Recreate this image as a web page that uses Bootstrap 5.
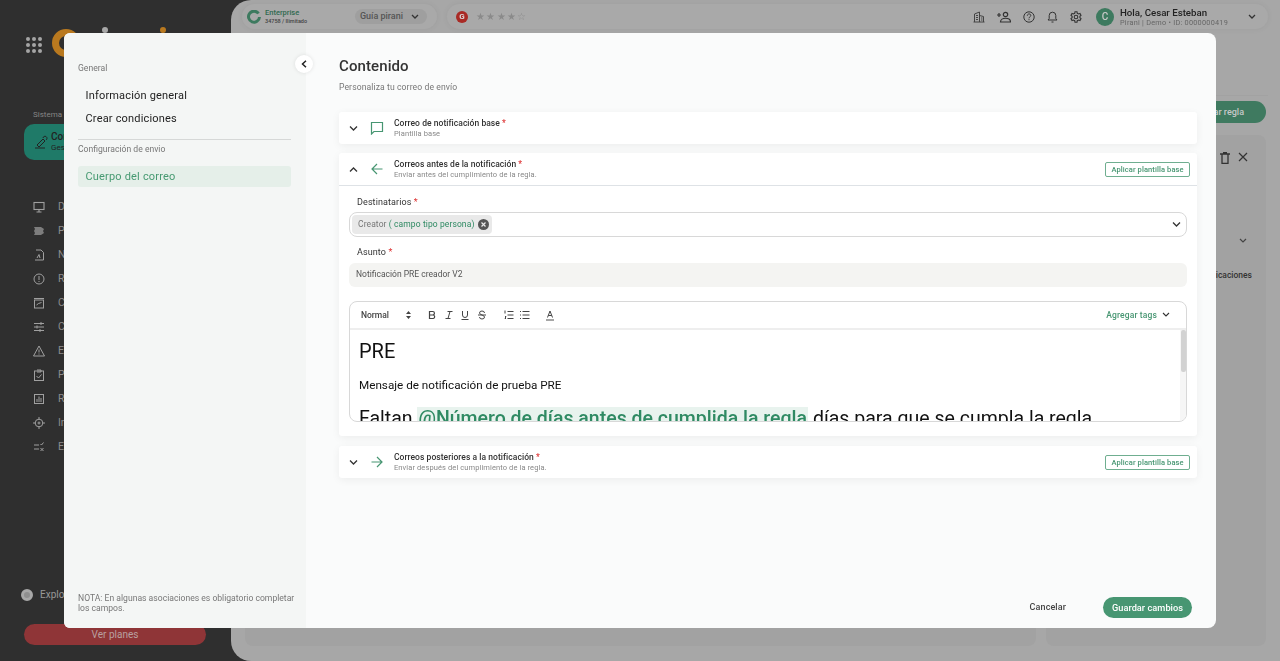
<!DOCTYPE html>
<html lang="es">
<head>
<meta charset="utf-8">
<title>Contenido</title>
<link href="https://cdn.jsdelivr.net/npm/bootstrap@5.3.0/dist/css/bootstrap.min.css" rel="stylesheet">
<style>
html,body{height:100%;overflow:hidden}
body{font-family:Roboto,"Liberation Sans",sans-serif;background:#2f2f2f;color:#222;position:relative}
svg{display:block;flex:none}
.shell{height:661px;filter:blur(.5px)}
.dark-side{width:231px;background:#2f2f2f;color:#9a9a9a;flex:none;height:661px}
.apps{display:grid;grid-template-columns:repeat(3,4px);gap:2px;margin:37px 0 0 26px;width:16px;height:16px}
.apps i{width:4px;height:4px;background:#a5a5a5;border-radius:50%}
.logo-ring{position:absolute;left:52px;top:29px;width:28px;height:28px;border:7px solid #b9791f;border-radius:50%}
.logo-dot{position:absolute;top:27px;width:6px;height:6px;border-radius:50%}
.sys-label{font-size:8px;margin:56px 0 0 33px;line-height:12px;color:#858585;width:31px;overflow:hidden;white-space:nowrap}
.sys-card{margin:3px 0 0 24px;height:36px;width:190px;background:#1f7a68;border-radius:10px;color:#222;padding-left:10px;gap:3px}
.sys-text{width:13px;overflow:hidden;white-space:nowrap;font-size:10px;line-height:10px;font-weight:500}
.sys-text span{font-size:8px;font-weight:400}
.side-nav{margin-top:35px;padding-left:33px}
.side-nav>div{height:24px;font-size:10.5px;gap:13px;color:#8c8c8c}
.explore{position:absolute;left:21px;top:587px;gap:7px;font-size:10px;color:#999}
.explore i{width:12px;height:12px;border-radius:50%;background:#8f8f8f;border:3px solid #a8a8a8}
.plans{position:absolute;left:24px;top:624px;width:182px;height:21px;border-radius:11px;background:#8f3537;color:#b9a0a0;font-size:10px;line-height:21px;text-align:center}
.main-area{background:#a7a7a7;border-radius:20px 0 0 20px;height:661px;position:relative;flex:1}
.top-pill{position:absolute;top:4px;height:25px;background:#a9a9a9;border-radius:13px;box-shadow:0 0 6px rgba(0,0,0,.06)}
.plan-name{font-size:7.5px;font-weight:500;color:#2f6a50;line-height:8px}
.plan-sub{font-size:5.5px;font-weight:500;color:#444;line-height:8px}
.guide{font-size:9px;color:#555;background:#9f9f9f;border-radius:10px;height:15px;padding:0 8px 0 5px;gap:8px;font-weight:500;margin-right:2px}
.star{font-size:10px;color:#8a8a8a;letter-spacing:1.3px}
.g-icon{width:12px;height:12px;border-radius:50%;background:#a92a25;color:#ddd;font-size:8px;font-weight:700;line-height:12px;text-align:center}
.hello{font-size:9.7px;font-weight:500;color:#222;line-height:11px;white-space:nowrap}
.hello-sub{font-size:7.3px;color:#666;line-height:9px;letter-spacing:.25px;white-space:nowrap}
.avatar{width:18px;height:18px;border-radius:50%;background:#3d7a5f;color:#c9c9c9;font-size:10px;font-weight:500;text-align:center;line-height:18px}
.user-box{width:131px;gap:6px;margin-left:2px}
.user-caret{margin-left:9px}
.bg-line{position:absolute;left:0;right:12px;top:95px;height:1px;background:#a2a2a2}
.new-rule{position:absolute;right:14px;top:101px;width:100px;height:22px;border-radius:11px;background:#3f7a60;color:#c8c8c8;font-size:9px;font-weight:500;line-height:22px;text-align:right;padding-right:22px}
.bg-panel{position:absolute;top:135px;height:511px;background:#a2a2a2;border-radius:8px}
.bg-tools{margin:17px 18px 0 0;height:12px}
.bg-caret{position:absolute;left:1008px;top:238px}
.bg-word{position:absolute;left:985px;top:269px;font-size:8.5px;font-weight:500;color:#333;width:36px;overflow:hidden;white-space:nowrap;direction:rtl}
.modal-box{position:absolute;left:64px;top:33px;width:1152px;height:595px;background:#fafbfb;border-radius:6px 8px 8px 6px;overflow:hidden;z-index:5}
.m-side{width:242px;background:#f4f6f5;padding:30px 15px 15px 14px;flex:none}
.m-label{font-size:8.6px;color:#777;line-height:11px}
.m-item{font-size:11px;letter-spacing:.18px;color:#222;line-height:23px;padding-left:7.5px}
.m-first{margin-top:10px}
.m-active{background:#e5efe9;color:#479a72;border-radius:3px;height:21px;line-height:21px;margin-top:11px}
.m-rule{border-top:1px solid #d6d8d7;margin:9px 0 4px}
.m-note{font-size:8.6px;line-height:10px;color:#777;margin-top:auto;margin-right:-4px}
.collapse-dot{position:absolute;left:231px;top:22px;width:18px;height:18px;border-radius:50%;background:#fff;box-shadow:0 0 4px rgba(0,0,0,.1);z-index:6}
.m-main{padding:24px 19px 10px 33px;min-width:0}
.m-title{font-size:15px;font-weight:500;line-height:18px;color:#333;letter-spacing:.1px}
.m-sub{font-size:8.6px;color:#777;line-height:11px;margin-top:7px;letter-spacing:.1px}
.acc{background:#fff;border-radius:3px;box-shadow:0 2px 8px rgba(0,0,0,.06)}
.acc-one{margin-top:19px}
.acc-two{margin-top:9px;height:283px}
.acc-three{margin-top:10px}
.acc-head{height:32px;padding:0 7px 0 10px}
.acc-head-open{height:33px}
.acc-ic{margin:0 10px 0 12px}
.acc-title{font-size:8.5px;font-weight:500;color:#333;line-height:11px;letter-spacing:.05px}
.acc-title b{color:#d33;font-weight:500}
.acc-sub{font-size:7.5px;color:#888;line-height:10px;letter-spacing:.1px}
.apply{font-size:7.5px;font-weight:500;color:#479672;border:1px solid #6fae90;border-radius:2px;background:#fff;padding:0;width:85px;height:15px;line-height:13px;letter-spacing:.1px}
.acc-body{padding:10px 10px 0}
.fld-label{font-size:9px;color:#333;line-height:12px;padding-left:8px;letter-spacing:.1px}
.fld-label b{color:#d33;font-weight:400}
.fld-gap{margin-top:9px}
.sel-box{height:25px;border:1px solid #d8d8d8;border-radius:8px;padding:0 5px 0 2px;margin-top:4px}
.chip{height:19px;background:#e9e9e9;border-radius:4px;font-size:8.5px;color:#777;padding:0 3px 0 6px;gap:4px;letter-spacing:.1px}
.chip span{color:#2f8a63}
.chip-x{width:11px;height:11px;background:#555;border-radius:50%}
.subject{height:24px;background:#f4f4f2;border-radius:6px;font-size:8.5px;color:#555;padding-left:7px;margin-top:5px;line-height:22px}
.editor{height:121px;border:1px solid #d8d8d8;border-radius:8px;margin-top:14px;overflow:hidden}
.tools{height:28px;border-bottom:2px solid #eee;padding:0 16px 0 11px;font-size:8.5px;font-weight:500;color:#444}
.spin{margin-left:17px}
.fmt-a{gap:6.5px;margin-left:16px}
.fmt-b{gap:6px;margin-left:17px}
.fmt-c{margin-left:15px}
.tag-add{font-size:8.5px;color:#479672;letter-spacing:.15px;gap:5px}
.ed-body{height:91px;overflow:hidden;padding:0 0 0 9px;position:relative}
.ed-h{font-size:20px;line-height:24px;color:#111;white-space:nowrap;margin-top:9px}
.ed-line{font-size:19.5px;line-height:24px;color:#111;white-space:nowrap}
.ed-p{font-size:11.7px;line-height:14px;color:#111;margin:15px 0 15px}
.mention{background:#e8f3ee;color:#2f8a63;font-weight:500;padding:0 1px}
.bar-track{position:absolute;right:0;top:0;bottom:0;width:6px;background:#f6f6f6}
.bar-thumb{position:absolute;left:1px;top:0;width:5px;height:42px;background:#d2d2d2;border-radius:2px}
.foot{padding-right:5px}
.cancel{font-size:9px;font-weight:500;color:#444;letter-spacing:.1px}
.save{width:89px;height:21px;background:#479672;color:#fff;border-radius:11px;border:0;font-size:9.2px;font-weight:500;padding:0;letter-spacing:.05px;margin-left:37px}
</style>
</head>
<body>
<div class="shell d-flex">
  <aside class="dark-side">
    <div class="apps"><i></i><i></i><i></i><i></i><i></i><i></i><i></i><i></i><i></i></div>
    <div class="logo-ring"></div>
    <div class="logo-dot" style="left:102px;background:#a8a8a8"></div>
    <div class="logo-dot" style="left:160px;background:#b9791f"></div>
    <div class="sys-label">Sistema de gestión</div>
    <div class="sys-card d-flex align-items-center">
      <svg width="14" height="14" viewBox="0 0 14 14" fill="none" stroke="#222" stroke-width="1"><path d="M1 13h10M3 10l6-6 2 2-6 6zM9 3a2 2 0 1 1 3 2"/></svg>
      <div class="sys-text">Con<br><span>Gestión</span></div>
    </div>
    <div class="side-nav">
      <div class="d-flex align-items-center"><svg width="12" height="12" viewBox="0 0 12 12" fill="none" stroke="#a0a0a0" stroke-width="1.1"><rect x="1" y="1.500" width="10" height="7"/><path d="M6 9v2M3.500 11h5"/></svg>D</div>
      <div class="d-flex align-items-center"><svg width="12" height="12" viewBox="0 0 12 12" fill="#7d7d7d"><path d="M1 2h7l3 2-1 2 1 2-3 2H1l1-2-1-2 1-2z"/></svg>P</div>
      <div class="d-flex align-items-center"><svg width="12" height="12" viewBox="0 0 12 12" fill="none" stroke="#a0a0a0" stroke-width="1"><path d="M3 1h5l2.500 2.500V11H2M4 9l2-3.500L7 9"/></svg>N</div>
      <div class="d-flex align-items-center"><svg width="12" height="12" viewBox="0 0 12 12" fill="none" stroke="#a0a0a0" stroke-width="1"><circle cx="6" cy="6" r="5"/><path d="M6 3v4M6 8v1"/></svg>R</div>
      <div class="d-flex align-items-center"><svg width="12" height="12" viewBox="0 0 12 12" fill="none" stroke="#a0a0a0" stroke-width="1"><rect x="1.500" y="3" width="9" height="8"/><path d="M1 1.500h10M3.500 8l2-1.500 3-1"/></svg>C</div>
      <div class="d-flex align-items-center"><svg width="12" height="12" viewBox="0 0 12 12" fill="none" stroke="#a0a0a0" stroke-width="1"><path d="M1 2.500h10M1 6h10M1 9.500h10M8 1v3M4 4.500v3M7 8v3"/></svg>C</div>
      <div class="d-flex align-items-center"><svg width="12" height="12" viewBox="0 0 12 12" fill="none" stroke="#a0a0a0" stroke-width="1"><path d="M6 1l5.500 10H.5zM6 4.500v3M6 8.500v1"/></svg>E</div>
      <div class="d-flex align-items-center"><svg width="12" height="12" viewBox="0 0 12 12" fill="none" stroke="#a0a0a0" stroke-width="1"><rect x="1.500" y="2" width="9" height="9.500"/><path d="M4 1h4v2H4M3.500 7l2 2 3-3.500"/></svg>P</div>
      <div class="d-flex align-items-center"><svg width="12" height="12" viewBox="0 0 12 12" fill="none" stroke="#a0a0a0" stroke-width="1"><rect x="1.500" y="1.500" width="9" height="9"/><path d="M4 9V6M6 9V3.500M8 9V5"/></svg>R</div>
      <div class="d-flex align-items-center"><svg width="12" height="12" viewBox="0 0 12 12" fill="none" stroke="#a0a0a0" stroke-width="1"><circle cx="6" cy="6" r="3.800"/><circle cx="6" cy="6" r="1"/><path d="M6 0v2.500M6 9.500V12M0 6h2.500M9.500 6H12"/></svg>In</div>
      <div class="d-flex align-items-center"><svg width="12" height="12" viewBox="0 0 12 12" fill="none" stroke="#a0a0a0" stroke-width="1"><path d="M1 4h5M1 8h5M7.500 3l1 1 2-2.500M7.500 7l3 3M10.500 7l-3 3"/></svg>E</div>
    </div>
    <div class="explore d-flex align-items-center"><i></i>Explo</div>
    <div class="plans">Ver planes</div>
  </aside>
  <main class="main-area">
    <div class="top-pill d-flex align-items-center" style="left:11px;width:195px;padding:0 8px 0 5px">
      <svg width="14" height="14" viewBox="0 0 14 14" fill="none" stroke="#3d7a5f" stroke-width="3"><path d="M11.500 3.500A5.500 5.500 0 1 0 12.500 7"/></svg>
      <div class="ms-1"><div class="plan-name">Enterprise</div><div class="plan-sub">34758 / Ilimitado</div></div>
      <div class="guide d-flex align-items-center ms-auto">Guía pirani
        <svg width="8" height="6" viewBox="0 0 8 6" fill="none" stroke="#333" stroke-width="1.300"><path d="M1 1l3 3 3-3"/></svg></div>
    </div>
    <div class="top-pill d-flex align-items-center" style="left:216px;width:821px;padding:0 12px 0 9px">
      <div class="g-icon">G</div><div class="star ms-2">★★★★☆</div>
      <div class="ms-auto d-flex align-items-center" style="gap:12px">
        <svg width="12" height="12" viewBox="0 0 12 12" fill="none" stroke="#444" stroke-width="1"><path d="M1.500 11V3l5-2v10M6.500 4.500l4 1V11M.5 11h11M3 4.500h2M3 6.500h2M3 8.500h2M8 7h1.500M8 9h1.500"/></svg>
        <svg width="14" height="12" viewBox="0 0 14 12" fill="none" stroke="#333" stroke-width="1.200"><circle cx="8.500" cy="3.500" r="2.200"/><path d="M3.500 11c0-5 10-5 10 0zM0 4h4M2 2v4"/></svg>
        <svg width="12" height="12" viewBox="0 0 12 12" fill="none" stroke="#333" stroke-width="1"><circle cx="6" cy="6" r="5.200"/><path d="M4.300 4.700c0-2.300 3.500-2.300 3.500-.2 0 1.300-1.800 1.300-1.800 2.800M6 8.200v1"/></svg>
        <svg width="11" height="12" viewBox="0 0 11 12" fill="none" stroke="#333" stroke-width="1"><path d="M1 9h9L8.800 7.500V4.500a3.300 3.300 0 0 0-6.600 0v3zM4.500 11h2"/></svg>
        <svg width="12" height="12" viewBox="0 0 12 12" fill="none" stroke="#333" stroke-width="1.100"><circle cx="6" cy="6" r="1.800"/><path d="M5 .8h2l.3 1.500 1.300.7 1.400-.5 1 1.800-1.100 1v1.400l1.100 1-1 1.800-1.400-.5-1.300.7L7 11.200H5l-.3-1.500-1.300-.7-1.400.5-1-1.800 1.100-1V5.300L1 4.300l1-1.800 1.400.5 1.300-.7z"/></svg>
        <div class="user-box d-flex align-items-center">
          <div class="avatar flex-shrink-0">C</div>
          <div><div class="hello">Hola, Cesar Esteban</div><div class="hello-sub">Pirani | Demo • ID: 0000000419</div></div>
        </div>
        <svg class="user-caret" width="8" height="6" viewBox="0 0 8 6" fill="none" stroke="#333" stroke-width="1.300"><path d="M1 1l3 3 3-3"/></svg>
      </div>
    </div>
    <div class="bg-line"></div>
    <div class="new-rule">Crear regla</div>
    <div class="bg-panel" style="left:14px;width:791px"></div>
    <div class="bg-panel d-flex justify-content-end" style="left:815px;width:220px">
      <div class="bg-tools d-flex gap-2">
        <svg width="10" height="12" viewBox="0 0 10 12" fill="none" stroke="#333" stroke-width="1.300"><path d="M0 2h10M2 2v9.300h6V2M3 .7h4"/></svg>
        <svg width="10" height="10" viewBox="0 0 10 10" fill="none" stroke="#333" stroke-width="1.200"><path d="M1 1l8 8M9 1l-8 8"/></svg>
      </div>
    </div>
    <div class="bg-caret"><svg width="8" height="6" viewBox="0 0 8 6" fill="none" stroke="#444" stroke-width="1.200"><path d="M1 1l3 3 3-3"/></svg></div>
    <div class="bg-word">icaciones</div>
  </main>
</div>

<div class="modal-box d-flex">
  <div class="m-side d-flex flex-column">
    <div class="m-label">General</div>
    <div class="m-item m-first">Información general</div>
    <div class="m-item">Crear condiciones</div>
    <div class="m-rule"></div>
    <div class="m-label">Configuración de envio</div>
    <div class="m-item m-active">Cuerpo del correo</div>
    <div class="m-note">NOTA: En algunas asociaciones es obligatorio completar los campos.</div>
  </div>
  <div class="collapse-dot d-flex align-items-center justify-content-center">
    <svg width="6" height="8" viewBox="0 0 6 8" fill="none" stroke="#222" stroke-width="1.500"><path d="M5 .7L1.500 4 5 7.300"/></svg>
  </div>
  <div class="m-main flex-grow-1 d-flex flex-column">
    <div class="m-title">Contenido</div>
    <div class="m-sub">Personaliza tu correo de envío</div>
    <div class="acc acc-one">
      <div class="acc-head d-flex align-items-center">
        <svg width="9" height="7" viewBox="0 0 9 7" fill="none" stroke="#333" stroke-width="1.300"><path d="M1 1.500l3.500 3.500L8 1.500"/></svg>
        <svg class="acc-ic" width="14" height="14" viewBox="0 0 14 14" fill="none" stroke="#479672" stroke-width="1.200"><path d="M1.500 1.500h11v9H4l-2.500 2.500z"/></svg>
        <div><div class="acc-title">Correo de notificación base <b>*</b></div><div class="acc-sub">Plantilla base</div></div>
      </div>
    </div>
    <div class="acc acc-two">
      <div class="acc-head acc-head-open d-flex align-items-center border-bottom">
        <svg width="9" height="7" viewBox="0 0 9 7" fill="none" stroke="#333" stroke-width="1.300"><path d="M1 5.500L4.500 2 8 5.500"/></svg>
        <svg class="acc-ic" width="14" height="14" viewBox="0 0 14 14" fill="none" stroke="#479672" stroke-width="1.200"><path d="M12.500 7H2M7 2L2 7l5 5"/></svg>
        <div><div class="acc-title">Correos antes de la notificación <b>*</b></div><div class="acc-sub">Enviar antes del cumplimiento de la regla.</div></div>
        <button class="apply ms-auto" type="button">Aplicar plantilla base</button>
      </div>
      <div class="acc-body">
        <div class="fld-label">Destinatarios <b>*</b></div>
        <div class="sel-box d-flex align-items-center justify-content-between">
          <div class="chip d-flex align-items-center"><div>Creator <span>( campo tipo persona)</span></div>
            <div class="chip-x d-flex align-items-center justify-content-center"><svg width="5" height="5" viewBox="0 0 5 5" stroke="#e9e9e9" stroke-width="1.200"><path d="M.5.5l4 4M4.500.5l-4 4"/></svg></div></div>
          <svg width="9" height="7" viewBox="0 0 9 7" fill="none" stroke="#333" stroke-width="1.300"><path d="M1 1.500l3.500 3.500L8 1.500"/></svg>
        </div>
        <div class="fld-label fld-gap">Asunto <b>*</b></div>
        <div class="subject">Notificación PRE creador V2</div>
        <div class="editor">
          <div class="tools d-flex align-items-center">
            <span>Normal</span>
            <svg class="spin" width="5" height="8" viewBox="0 0 5 8" fill="#444"><path d="M2.500 0L5 3H0zM2.500 8L0 5h5z"/></svg>
            <div class="fmt-a d-flex align-items-center">
              <svg width="10" height="10" viewBox="0 0 10 10" fill="none" stroke="#444" stroke-width="1.200"><path d="M2.500 1.500h3.200a1.700 1.700 0 0 1 0 3.500H2.500zM2.500 5h3.800a1.800 1.800 0 0 1 0 3.500H2.500z"/></svg>
              <svg width="10" height="10" viewBox="0 0 10 10" fill="none" stroke="#444" stroke-width="1"><path d="M3.500 1.500h5M1.500 8.500h5M6 1.500L4 8.500"/></svg>
              <svg width="10" height="10" viewBox="0 0 10 10" fill="none" stroke="#444" stroke-width="1"><path d="M2.500 1v4a2.500 2.500 0 0 0 5 0V1M1.500 9.500h7"/></svg>
              <svg width="10" height="10" viewBox="0 0 10 10" fill="none" stroke="#444" stroke-width="1"><path d="M7.500 3a2.500 2 0 0 0-5 0c0 2 5 2 5 4a2.500 2 0 0 1-5 0M1 5h8"/></svg>
            </div>
            <div class="fmt-b d-flex align-items-center">
              <svg width="10" height="10" viewBox="0 0 10 10" fill="none" stroke="#444" stroke-width="1"><path d="M3.500 1.500h6M3.500 5h6M3.500 8.500h6M1 .5v3M1 6.500h1L1 8.500h1"/></svg>
              <svg width="10" height="10" viewBox="0 0 10 10" fill="none" stroke="#444" stroke-width="1"><path d="M2.500 1.500h7M2.500 5h7M2.500 8.500h7M0 1.500h1M0 5h1M0 8.500h1"/></svg>
            </div>
            <svg class="fmt-c" width="10" height="11" viewBox="0 0 10 11" fill="none" stroke="#444" stroke-width="1"><path d="M2.500 7.500L5 1l2.500 6.500M3.300 5.500h3.400"/><path d="M1 10h8" stroke="#888" stroke-width="1.500"/></svg>
            <div class="tag-add ms-auto d-flex align-items-center">Agregar tags
              <svg width="8" height="6" viewBox="0 0 8 6" fill="none" stroke="#333" stroke-width="1.100"><path d="M1 1l3 3 3-3"/></svg></div>
          </div>
          <div class="ed-body">
            <div class="ed-h">PRE</div>
            <div class="ed-p">Mensaje de notificación de prueba PRE</div>
            <div class="ed-line">Faltan <span class="mention">@Número de días antes de cumplida la regla</span> días para que se cumpla la regla</div>
            <div class="bar-track"><div class="bar-thumb"></div></div>
          </div>
        </div>
      </div>
    </div>
    <div class="acc acc-three">
      <div class="acc-head d-flex align-items-center">
        <svg width="9" height="7" viewBox="0 0 9 7" fill="none" stroke="#333" stroke-width="1.300"><path d="M1 1.500l3.500 3.500L8 1.500"/></svg>
        <svg class="acc-ic" width="14" height="14" viewBox="0 0 14 14" fill="none" stroke="#479672" stroke-width="1.200"><path d="M1.500 7H12M7 2l5 5-5 5"/></svg>
        <div><div class="acc-title">Correos posteriores a la notificación <b>*</b></div><div class="acc-sub">Enviar después del cumplimiento de la regla.</div></div>
        <button class="apply ms-auto" type="button">Aplicar plantilla base</button>
      </div>
    </div>
    <div class="foot mt-auto d-flex align-items-center justify-content-end">
      <span class="cancel">Cancelar</span>
      <button class="save" type="button">Guardar cambios</button>
    </div>
  </div>
</div>
<script src="https://cdn.jsdelivr.net/npm/bootstrap@5.3.0/dist/js/bootstrap.bundle.min.js"></script>
</body>
</html>
